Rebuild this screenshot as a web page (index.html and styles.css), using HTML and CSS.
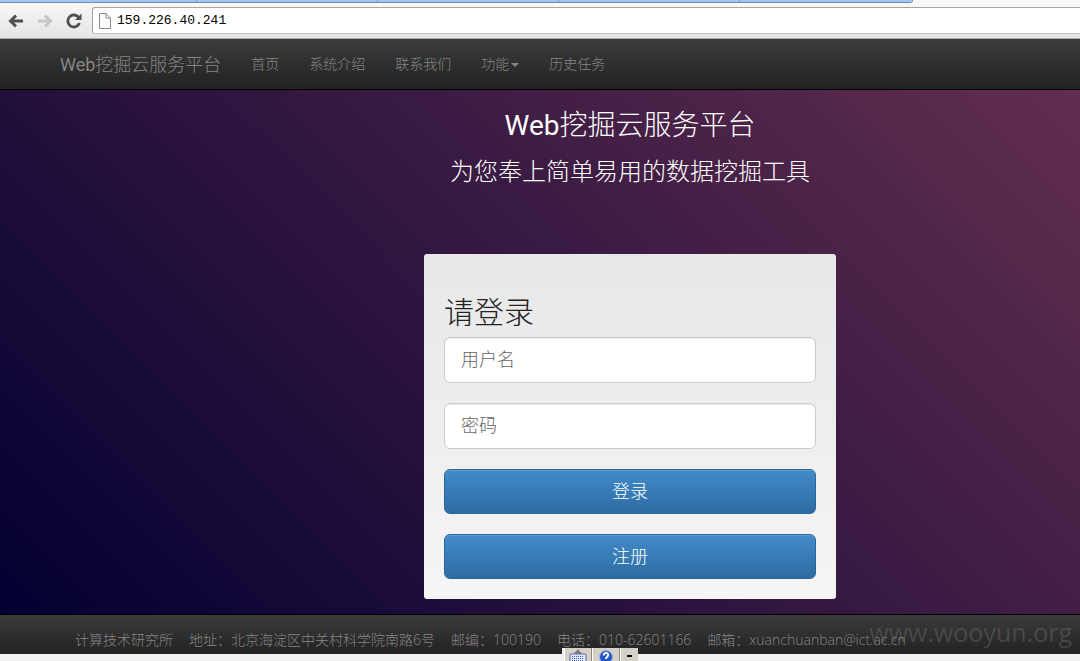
FILE: index.html
```html
<!DOCTYPE html>
<html lang="zh-CN">
<head>
<meta charset="utf-8">
<title>Web挖掘云服务平台</title>
<link rel="stylesheet" href="styles.css">
</head>
<body>
<div class="browser">
  <div class="tabs"><span class="tab tab-first"></span><span class="tab"></span><span class="tab"></span><span class="tab"></span><span class="tab tab-last"></span></div>
  <div class="toolbar">
    <button class="tool" aria-label="后退"><svg width="16" height="14" viewBox="0 0 16 14" fill="none" stroke="#505050" stroke-width="3"><path d="M15 7H3M8 1.500L2.500 7L8 12.500"/></svg></button>
    <button class="tool" aria-label="前进" disabled><svg width="16" height="14" viewBox="0 0 16 14" fill="none" stroke="#c6c6c6" stroke-width="3"><path d="M1 7H13M8 1.500L13.500 7L8 12.500"/></svg></button>
    <button class="tool" aria-label="刷新"><svg width="16" height="16" viewBox="0 0 16 16"><path d="M12.800 4.600A6 6 0 1 0 13.500 10" fill="none" stroke="#505050" stroke-width="2.800"/><path d="M15.500 0.500V7H9z" fill="#505050"/></svg></button>
    <label class="address">
      <svg width="12" height="16" viewBox="0 0 12 16" fill="#fafafa" stroke="#8a8a8a"><path d="M.5.500H7L11.500 5V15.500H.5zM7 .5V5H11.500"/></svg>
      <input class="url" type="text" value="159.226.40.241" aria-label="地址栏">
    </label>
  </div>
</div>
<nav class="navbar">
  <a class="brand" href="#"><span class="latin">Web</span>挖掘云服务平台</a>
  <a class="nav-link" href="#">首页</a>
  <a class="nav-link" href="#">系统介绍</a>
  <a class="nav-link" href="#">联系我们</a>
  <a class="nav-link" href="#">功能<span class="caret"></span></a>
  <a class="nav-link" href="#">历史任务</a>
</nav>
<main class="hero">
  <h1 class="title"><span class="latin">Web</span>挖掘云服务平台</h1>
  <p class="subtitle">为您奉上简单易用的数据挖掘工具</p>
  <form class="panel">
    <h2 class="panel-title">请登录</h2>
    <input class="field" type="text" placeholder="用户名" aria-label="用户名">
    <input class="field" type="password" placeholder="密码" aria-label="密码">
    <button class="submit" type="button">登录</button>
    <button class="submit" type="button">注册</button>
  </form>
</main>
<footer class="footer">
  <span>计算技术研究所</span>
  <span>地址：北京海淀区中关村科学院南路6号</span>
  <span>邮编：100190</span>
  <span>电话：010-62601166</span>
  <span>邮箱：xuanchuanban@ict.ac.cn</span>
  <div class="watermark">www.wooyun.org</div>
  <div class="langbar">
    <span class="cell"><svg width="18" height="13" viewBox="0 0 18 13"><path d="M11 7V5L7 4.500L10 2" fill="none" stroke="#777" stroke-width="2"/><rect x="1" y="6" width="16" height="9" rx="1" fill="#e4eaff" stroke="#5763b0"/><path d="M3 8.500H15M3 10.500H15M3 12.500H15" stroke="#4a58b0" stroke-dasharray="1 1"/></svg></span>
    <span class="cell"><svg width="14" height="13" viewBox="0 0 14 13"><circle cx="7" cy="9" r="6.500" fill="#2458c8" stroke="#9fb6e8"/><path d="M4.800 7.500C4.800 4.200 9.300 4.500 9.200 7C9.100 8.800 7 8.800 7 11" fill="none" stroke="#fff" stroke-width="2"/></svg></span>
    <span class="cell cell-small"><span class="dash"></span></span>
  </div>
</footer>
</body>
</html>
```
FILE: styles.css
```css
* { box-sizing: border-box; }

body {
  margin: 0;
  min-height: 100vh;
  overflow: hidden;
  background: #f1f1f1;
  font-family: "Open Sans", "Noto Sans CJK SC", sans-serif;
  font-size: 14px;
  line-height: 20px;
  font-weight: 300;
}

a { text-decoration: none; }

.browser { background: linear-gradient(#fafafa, #e4e4e4); border-bottom: 1px solid #aaa; }
.tabs { display: flex; width: 913px; height: 3px; background: #a3c6ef; border-bottom: 1px solid #6c8db8; border-bottom-right-radius: 3px; }
.tab { width: 181px; border-right: 1px solid #7c9cc8; }
.tab-first { width: 197px; }
.tab-last { flex: 1; }
.toolbar { display: flex; align-items: center; gap: 13px; height: 35px; padding-left: 8px; }
.tool { display: flex; padding: 0; border: 0; background: none; }
.address {
  display: flex;
  flex: 1;
  align-items: center;
  gap: 6px;
  height: 27px;
  margin-left: -3px;
  padding-left: 6px;
  background: #fff;
  border: 1px solid #aaa39b;
  border-right: 0;
  border-bottom-color: #c4c4c4;
  border-radius: 3px 0 0 3px;
}
.url { flex: 1; padding: 0; border: 0; outline: 0; background: none; color: #000; font: 13px "Liberation Mono", monospace; }

.navbar {
  display: flex;
  align-items: center;
  height: 51px;
  padding-left: 45px;
  background: linear-gradient(#3c3c3c, #222);
  border-bottom: 1px solid #000;
}
.brand, .nav-link { padding: 0 15px; color: #858585; }
.brand { font-size: 18px; }
.latin { font-family: Roboto, sans-serif; font-weight: 400; line-height: 1; }
.caret { display: inline-block; margin-left: 2px; border: 4px solid transparent; border-top-color: #858585; border-bottom: 0; vertical-align: middle; }

.hero {
  display: flex;
  flex-direction: column;
  align-items: center;
  padding: 18px 0 15px 180px;
  background: linear-gradient(45deg, #020031, #6d3353) left top / calc(100% + 180px) 100%;
  color: #fff;
}
.title { margin: 0; font-size: 28px; line-height: 32px; font-weight: 300; }
.subtitle { margin: 16px 0 68px; font-size: 24px; line-height: 30px; }

.panel {
  display: grid;
  gap: 20px;
  width: 412px;
  padding: 41px 20px 20px;
  background: linear-gradient(#e8e8e8, #f5f5f5);
  border-radius: 3px;
}
.panel-title { margin: 0 0 -11px; color: #222; font-size: 30px; line-height: 33px; font-weight: 300; }
.field, .submit { width: 100%; font-family: inherit; font-size: 18px; font-weight: 300; border-radius: 6px; }
.field {
  height: 46px;
  padding: 0 16px 2px;
  background: #fff;
  border: 1px solid #ccc;
  box-shadow: inset 0 1px 1px rgba(0, 0, 0, .08);
}
.field::placeholder { color: #666; opacity: 1; }
.submit {
  height: 45px;
  padding: 0 0 3px;
  color: #fff;
  background: linear-gradient(#428bca, #2d6ca2);
  border: 1px solid #2b669a;
  box-shadow: inset 0 1px 0 rgba(255, 255, 255, .15);
}

.footer {
  position: relative;
  display: flex;
  gap: 16px;
  padding: 15px 0 4px 75px;
  background: linear-gradient(#3c3c3c, #222);
  border-top: 1px solid #000;
  color: #858585;
  white-space: nowrap;
}
.watermark { position: absolute; right: 8px; top: 2px; color: rgba(125, 125, 125, .35); font-family: "Open Sans", sans-serif; font-size: 25px; line-height: 30px; font-weight: 400; }
.langbar { position: absolute; left: 562px; bottom: -8px; display: flex; height: 14px; padding-left: 2px; overflow: hidden; background: #f2efe8; }
.cell { display: flex; justify-content: center; width: 28px; background: #d5d1c8; border-left: 1px solid #fff; border-right: 1px solid #8c8984; }
.cell-small { width: 18px; border-right: 0; }
.dash { width: 5px; height: 2px; margin-top: 7px; background: #000; }
```
